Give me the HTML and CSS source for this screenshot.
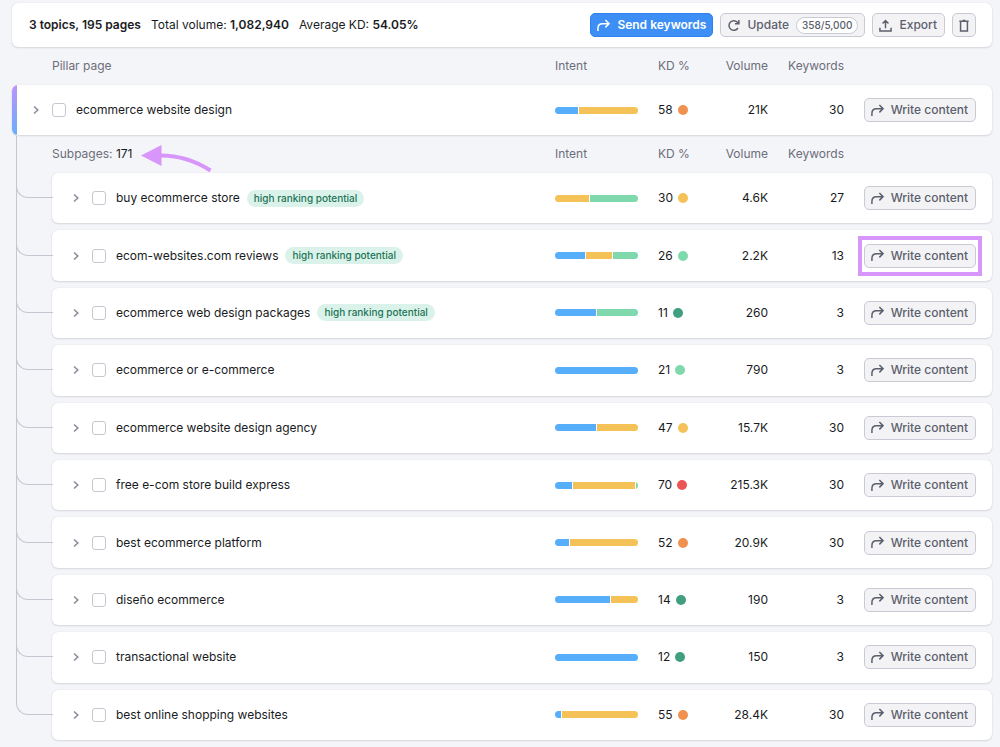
FILE: index.html
```html
<!DOCTYPE html>
<html lang="en">
<head>
<meta charset="utf-8">
<meta name="viewport" content="width=device-width, initial-scale=1">
<title>Keyword topics</title>
<link rel="stylesheet" href="styles.css">
</head>
<body>
<svg class="sprite" aria-hidden="true">
  <symbol id="i-share" viewBox="0 0 14 14"><path d="M1 13V10Q1 5 6 5H12.500M9 1L13 5L9 9"/></symbol>
  <symbol id="i-chevron" viewBox="0 0 8 10"><path d="M2 1.500L5.800 5L2 8.500"/></symbol>
  <symbol id="i-refresh" viewBox="0 0 14 14"><path d="M11.800 9.700A5.200 5.200 0 1 1 11.500 3.800L12.600 5M12.800 1V5.200H8.600"/></symbol>
  <symbol id="i-export" viewBox="0 0 14 14"><path d="M1 9.500V12.800H13V9.500M7 10V1.800M3.800 4.800L7 1.600L10.200 4.800"/></symbol>
  <symbol id="i-trash" viewBox="0 0 12 14"><path d="M1 2.500H11M4.500 1.500H7.500M2.300 2.500V12.800H9.700V2.500"/></symbol>
</svg>
<main class="page">
  <header class="toolbar">
    <p class="stat"><b>3 topics, 195 pages</b></p>
    <p class="stat">Total volume: <b>1,082,940</b></p>
    <p class="stat">Average KD: <b>54.05%</b></p>
    <div class="actions">
      <button class="btn btn-primary"><svg class="icon"><use href="#i-share"/></svg>Send keywords</button>
      <button class="btn btn-update"><svg class="icon"><use href="#i-refresh"/></svg>Update<span class="count">358/5,000</span></button>
      <button class="btn"><svg class="icon"><use href="#i-export"/></svg>Export</button>
      <button class="btn btn-icon" aria-label="Delete"><svg class="icon icon-trash"><use href="#i-trash"/></svg></button>
    </div>
  </header>

  <table class="grid pillar">
    <thead><tr class="row head"><th class="title" scope="col">Pillar page</th><th scope="col">Intent</th><th scope="col">KD %</th><th class="num" scope="col">Volume</th><th class="num" scope="col">Keywords</th><td></td></tr></thead>
    <tbody>
      <tr class="row card"><td class="name"><button class="toggle" aria-label="Expand"><svg class="chevron"><use href="#i-chevron"/></svg></button><input class="check" type="checkbox" id="p0"><label for="p0">ecommerce website design</label></td><td><div class="bar"><i class="blue" style="width:28%"></i><i class="yellow" style="width:72%"></i></div></td><td class="kd">58<i class="dot orange"></i></td><td class="num">21K</td><td class="num">30</td><td class="act"><button class="btn"><svg class="icon"><use href="#i-share"/></svg>Write content</button></td></tr>
    </tbody>
  </table>

  <table class="grid subpages">
    <thead><tr class="row head"><th class="title" scope="col">Subpages: <span class="total">171</span><svg class="arrow" viewBox="0 0 72 30" aria-hidden="true"><path class="arrow-line" d="M20 11.500Q46 11.500 69.500 26.500"/><path class="arrow-head" d="M0 11.500L20.500 1V22Z"/></svg></th><th scope="col">Intent</th><th scope="col">KD %</th><th class="num" scope="col">Volume</th><th class="num" scope="col">Keywords</th><td></td></tr></thead>
    <tbody>
      <tr class="row card"><td class="name"><button class="toggle" aria-label="Expand"><svg class="chevron"><use href="#i-chevron"/></svg></button><input class="check" type="checkbox" id="p1"><label for="p1">buy ecommerce store</label><span class="tag">high ranking potential</span></td><td><div class="bar"><i class="yellow" style="width:41%"></i><i class="green" style="width:59%"></i></div></td><td class="kd">30<i class="dot yellow"></i></td><td class="num">4.6K</td><td class="num">27</td><td class="act"><button class="btn"><svg class="icon"><use href="#i-share"/></svg>Write content</button></td></tr>
      <tr class="row card"><td class="name"><button class="toggle" aria-label="Expand"><svg class="chevron"><use href="#i-chevron"/></svg></button><input class="check" type="checkbox" id="p2"><label for="p2">ecom-websites.com reviews</label><span class="tag">high ranking potential</span></td><td><div class="bar"><i class="blue" style="width:37%"></i><i class="yellow" style="width:32%"></i><i class="green" style="width:31%"></i></div></td><td class="kd">26<i class="dot green"></i></td><td class="num">2.2K</td><td class="num">13</td><td class="act"><span class="marked"><button class="btn"><svg class="icon"><use href="#i-share"/></svg>Write content</button></span></td></tr>
      <tr class="row card"><td class="name"><button class="toggle" aria-label="Expand"><svg class="chevron"><use href="#i-chevron"/></svg></button><input class="check" type="checkbox" id="p3"><label for="p3">ecommerce web design packages</label><span class="tag">high ranking potential</span></td><td><div class="bar"><i class="blue" style="width:50%"></i><i class="green" style="width:50%"></i></div></td><td class="kd">11<i class="dot teal"></i></td><td class="num">260</td><td class="num">3</td><td class="act"><button class="btn"><svg class="icon"><use href="#i-share"/></svg>Write content</button></td></tr>
      <tr class="row card"><td class="name"><button class="toggle" aria-label="Expand"><svg class="chevron"><use href="#i-chevron"/></svg></button><input class="check" type="checkbox" id="p4"><label for="p4">ecommerce or e-commerce</label></td><td><div class="bar"><i class="blue" style="width:100%"></i></div></td><td class="kd">21<i class="dot green"></i></td><td class="num">790</td><td class="num">3</td><td class="act"><button class="btn"><svg class="icon"><use href="#i-share"/></svg>Write content</button></td></tr>
      <tr class="row card"><td class="name"><button class="toggle" aria-label="Expand"><svg class="chevron"><use href="#i-chevron"/></svg></button><input class="check" type="checkbox" id="p5"><label for="p5">ecommerce website design agency</label></td><td><div class="bar"><i class="blue" style="width:50%"></i><i class="yellow" style="width:50%"></i></div></td><td class="kd">47<i class="dot yellow"></i></td><td class="num">15.7K</td><td class="num">30</td><td class="act"><button class="btn"><svg class="icon"><use href="#i-share"/></svg>Write content</button></td></tr>
      <tr class="row card"><td class="name"><button class="toggle" aria-label="Expand"><svg class="chevron"><use href="#i-chevron"/></svg></button><input class="check" type="checkbox" id="p6"><label for="p6">free e-com store build express</label></td><td><div class="bar"><i class="blue" style="width:21%"></i><i class="yellow" style="width:76%"></i><i class="green" style="width:3%"></i></div></td><td class="kd">70<i class="dot red"></i></td><td class="num">215.3K</td><td class="num">30</td><td class="act"><button class="btn"><svg class="icon"><use href="#i-share"/></svg>Write content</button></td></tr>
      <tr class="row card"><td class="name"><button class="toggle" aria-label="Expand"><svg class="chevron"><use href="#i-chevron"/></svg></button><input class="check" type="checkbox" id="p7"><label for="p7">best ecommerce platform</label></td><td><div class="bar"><i class="blue" style="width:17%"></i><i class="yellow" style="width:83%"></i></div></td><td class="kd">52<i class="dot orange"></i></td><td class="num">20.9K</td><td class="num">30</td><td class="act"><button class="btn"><svg class="icon"><use href="#i-share"/></svg>Write content</button></td></tr>
      <tr class="row card"><td class="name"><button class="toggle" aria-label="Expand"><svg class="chevron"><use href="#i-chevron"/></svg></button><input class="check" type="checkbox" id="p8"><label for="p8">diseño ecommerce</label></td><td><div class="bar"><i class="blue" style="width:67%"></i><i class="yellow" style="width:33%"></i></div></td><td class="kd">14<i class="dot teal"></i></td><td class="num">190</td><td class="num">3</td><td class="act"><button class="btn"><svg class="icon"><use href="#i-share"/></svg>Write content</button></td></tr>
      <tr class="row card"><td class="name"><button class="toggle" aria-label="Expand"><svg class="chevron"><use href="#i-chevron"/></svg></button><input class="check" type="checkbox" id="p9"><label for="p9">transactional website</label></td><td><div class="bar"><i class="blue" style="width:100%"></i></div></td><td class="kd">12<i class="dot teal"></i></td><td class="num">150</td><td class="num">3</td><td class="act"><button class="btn"><svg class="icon"><use href="#i-share"/></svg>Write content</button></td></tr>
      <tr class="row card"><td class="name"><button class="toggle" aria-label="Expand"><svg class="chevron"><use href="#i-chevron"/></svg></button><input class="check" type="checkbox" id="p10"><label for="p10">best online shopping websites</label></td><td><div class="bar"><i class="blue" style="width:7%"></i><i class="yellow" style="width:93%"></i></div></td><td class="kd">55<i class="dot orange"></i></td><td class="num">28.4K</td><td class="num">30</td><td class="act"><button class="btn"><svg class="icon"><use href="#i-share"/></svg>Write content</button></td></tr>
    </tbody>
  </table>
</main>
</body>
</html>
```
FILE: styles.css
```css
* { box-sizing: border-box; }

body {
  margin: 0;
  background: #f4f5f9;
  color: #191b23;
  font: 12px/20px Inter, "Liberation Sans", sans-serif;
}

.sprite { position: absolute; width: 0; height: 0; }

.page {
  display: flex;
  flex-direction: column;
  min-height: 100vh;
  padding: 3px 8px 7px 12px;
}

.toolbar,
.card {
  background: #fff;
  border-radius: 6px;
  box-shadow: 0 0 1px rgba(25, 27, 35, 0.16), 0 1px 2px rgba(25, 27, 35, 0.12);
}

.toolbar {
  display: flex;
  align-items: center;
  gap: 10px;
  min-height: 44px;
  padding: 0 16px 0 17px;
}

.stat { margin: 0; white-space: nowrap; }
.stat b { font-weight: 600; }

.actions { display: flex; gap: 7px; margin-left: auto; }

.btn {
  display: inline-flex;
  align-items: center;
  gap: 7px;
  height: 24px;
  padding: 0 7px 0 6px;
  border: 1px solid #c9cbd4;
  border-radius: 5px;
  background: #f3f3f6;
  color: #5c5f6c;
  font: 500 12px/20px Inter, "Liberation Sans", sans-serif;
  white-space: nowrap;
}

.btn-primary {
  padding: 0 6px;
  border-color: #2c83ee;
  background: #3d8ff5;
  color: #fff;
  font-weight: 600;
}

.btn-update { padding: 0 6px; }
.btn-icon { width: 24px; padding: 0; justify-content: center; }

.count {
  padding: 0 5px;
  border: 1px solid #c9cbd4;
  border-radius: 9px;
  background: #fff;
  font-size: 10px;
  line-height: 15px;
}

.icon,
.chevron {
  flex: none;
  fill: none;
  stroke: currentColor;
  stroke-width: 1.6;
}

.icon { width: 13px; height: 13px; }
.icon-trash { width: 12px; }

.grid { display: flex; flex-direction: column; }

.grid thead,
.grid tbody { display: block; }

.row {
  display: grid;
  grid-template-columns: 1fr 103px 50px 60px 76px 132px;
  align-items: center;
  padding-right: 16px;
}

.row th,
.row td { padding: 0; text-align: left; font-weight: 400; }

.row .num { text-align: right; }
.row .act { display: flex; justify-content: flex-end; }

.head { min-height: 38px; color: #6c6e79; }
.pillar .title { padding-left: 40px; }
.total { color: #191b23; }

.card { position: relative; min-height: 50px; }

.row .name {
  display: flex;
  align-items: center;
  min-width: 0;
  padding-left: 16px;
}

.toggle {
  display: flex;
  justify-content: center;
  width: 16px;
  margin-right: 8px;
  padding: 0;
  border: 0;
  background: none;
  color: #8a8e9b;
}

.chevron { width: 8px; height: 10px; }

.check {
  appearance: none;
  width: 14px;
  height: 14px;
  margin: 0 10px 0 0;
  border: 1px solid #c4c7cf;
  border-radius: 3px;
  background: #fff;
}

.tag {
  margin-left: 7px;
  padding: 0 7px;
  border-radius: 9px;
  background: #dbf2ea;
  color: #1b7556;
  font-size: 10px;
  font-weight: 500;
  line-height: 17px;
}

.bar {
  display: flex;
  gap: 1px;
  width: 83px;
  height: 7px;
  overflow: hidden;
  border-radius: 4px;
}

.row .kd { display: flex; align-items: center; gap: 5px; }
.dot { width: 10px; height: 10px; border-radius: 50%; }

.blue { background: #57aefa; }
.yellow { background: #f4c257; }
.green { background: #7fd9ac; }
.teal { background: #3f9f80; }
.orange { background: #f19150; }
.red { background: #ea5455; }

.pillar .card { overflow: hidden; }

.pillar .card::before {
  content: "";
  position: absolute;
  inset: 0 auto 0 0;
  width: 5px;
  background: linear-gradient(#bd93fb, #68affb);
}

.subpages { flex: 1; margin-left: 40px; }

.subpages tbody {
  display: grid;
  flex: 1;
  grid-auto-rows: 1fr;
  gap: 7px;
}

/* Tree connector from the pillar line to each subpage */
.subpages .card::before {
  content: "";
  position: absolute;
  top: -50px;
  bottom: 50%;
  left: -36px;
  width: 36px;
  border: solid #c4c7cf;
  border-width: 0 0 1px 1px;
  border-bottom-left-radius: 12px;
}

.subpages .card:first-child::before { top: -37px; }

.subpages .title { position: relative; }

.arrow {
  position: absolute;
  top: 0;
  left: 89px;
  width: 72px;
  height: 30px;
}

.arrow-line { fill: none; stroke: #d896fa; stroke-width: 4; }
.arrow-head { fill: #d896fa; }

.marked { position: relative; display: flex; }

.marked::after {
  content: "";
  position: absolute;
  inset: -8px -6px;
  border: 4px solid #d896fa;
  pointer-events: none;
}
```
